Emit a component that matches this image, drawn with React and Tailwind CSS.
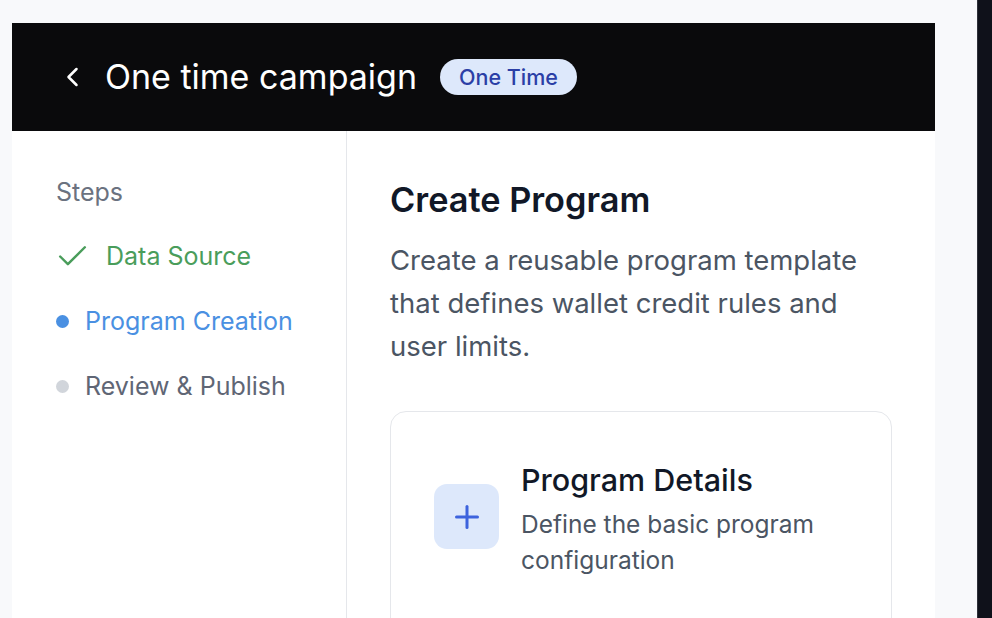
import React from 'react';
import { Check, Plus } from 'lucide-react';

const steps = [
  { label: 'Data Source', state: 'done' },
  { label: 'Program Creation', state: 'active' },
  { label: 'Review & Publish', state: 'todo' },
];

const App = () => {
  return (
    <div className="h-screen w-full flex bg-[#f8f9fb] overflow-hidden" style={{ fontFamily: 'Inter, "Noto Sans", sans-serif' }}>
      <div className="w-[935px] pl-[12px] pt-[23px] flex flex-col">
        {/* Header */}
        <div className="h-[108px] bg-[#0a0a0c] flex items-center pl-[53px] shrink-0">
          <svg width="14" height="20" viewBox="0 0 14 20" fill="none" className="shrink-0">
            <path d="M11.5 2 L3.5 10 L11.5 18" stroke="white" strokeWidth="2.5" strokeLinecap="round" strokeLinejoin="round" />
          </svg>
          <h1 className="ml-[26px] text-[34px] font-normal text-white leading-[44px]">One time campaign</h1>
          <span className="ml-[23px] px-[19px] h-[36px] flex items-center rounded-full bg-[#dde8fb] text-[#2b3fa6] text-[21.5px] font-medium">
            One Time
          </span>
        </div>

        {/* Body */}
        <div className="flex-1 flex bg-white">
          {/* Steps sidebar */}
          <aside className="w-[335px] border-r border-[#e5e7eb] pl-[44px] pt-[47px] shrink-0">
            <p className="text-[25px] text-[#6b7280] leading-[28px]">Steps</p>
            <ul className="mt-[36px] flex flex-col gap-[36px]">
              {steps.map((s) => (
                <li key={s.label} className="flex items-center h-[29px]">
                  {s.state === 'done' && (
                    <>
                      <Check className="w-[37px] h-[37px] text-[#4a9d5b] -ml-[2px] shrink-0" strokeWidth={1.6} />
                      <span className="ml-[15px] text-[25px] text-[#4a9d5b]">{s.label}</span>
                    </>
                  )}
                  {s.state === 'active' && (
                    <>
                      <span className="w-[13px] h-[13px] rounded-full bg-[#4a90e2] shrink-0" />
                      <span className="ml-[16px] text-[25px] text-[#4a90e2]">{s.label}</span>
                    </>
                  )}
                  {s.state === 'todo' && (
                    <>
                      <span className="w-[13px] h-[13px] rounded-full bg-[#d1d5db] shrink-0" />
                      <span className="ml-[16px] text-[25px] text-[#5f6675]">{s.label}</span>
                    </>
                  )}
                </li>
              ))}
            </ul>
          </aside>

          {/* Main content */}
          <main className="flex-1 pl-[43px] pr-[43px] pt-[47px]">
            <h2 className="text-[34.3px] font-semibold text-[#111827] leading-[44px]">Create Program</h2>
            <p className="mt-[17px] text-[27.5px] text-[#4b5563] leading-[43px]">
              Create a reusable program template that defines wallet credit rules and user limits.
            </p>

            <div className="mt-[43px] border border-[#e5e7eb] rounded-[16px] h-[260px] px-[43px] pt-[48px]">
              <div className="flex items-start gap-[22px]">
                <div className="mt-[24px] w-[65px] h-[65px] rounded-[13px] bg-[#dde8fb] flex items-center justify-center shrink-0">
                  <Plus className="w-[36px] h-[36px] text-[#3d63dd]" strokeWidth={2} />
                </div>
                <div>
                  <h3 className="text-[30.5px] font-medium text-[#111827] leading-[40px]">Program Details</h3>
                  <p className="mt-[6px] text-[24.5px] text-[#4b5563] leading-[36px]">Define the basic program configuration</p>
                </div>
              </div>
            </div>
          </main>
        </div>
      </div>

      <div className="flex-1" />
      <div className="w-[15px] h-full bg-[#0f111a] border-l border-[#2e3039]" />
    </div>
  );
};

export default App;
